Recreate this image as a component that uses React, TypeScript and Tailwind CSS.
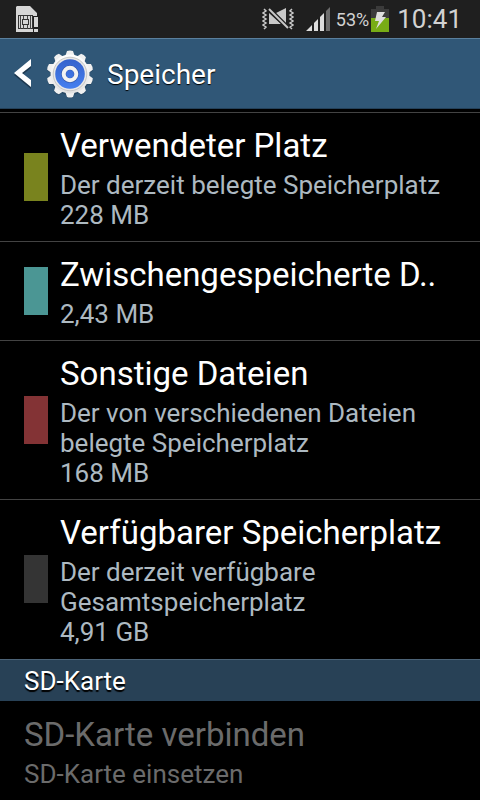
interface StorageItem {
  title: string
  lines: string[]
  swatch: string
}

const items: StorageItem[] = [
  {
    title: 'Verwendeter Platz',
    lines: ['Der derzeit belegte Speicherplatz', '228 MB'],
    swatch: 'bg-[#79831e]',
  },
  {
    title: 'Zwischengespeicherte D..',
    lines: ['2,43 MB'],
    swatch: 'bg-[#4b9694]',
  },
  {
    title: 'Sonstige Dateien',
    lines: ['Der von verschiedenen Dateien', 'belegte Speicherplatz', '168 MB'],
    swatch: 'bg-[#833335]',
  },
  {
    title: 'Verfügbarer Speicherplatz',
    lines: ['Der derzeit verfügbare', 'Gesamtspeicherplatz', '4,91 GB'],
    swatch: 'bg-[#343434]',
  },
]

function SimIcon() {
  return (
    <svg className="h-[26px] w-6" viewBox="0 0 24 26" aria-hidden="true">
      <path d="M1 0H14L21 7V10H17V26H0V1Z" fill="#d6d6d6" />
      <rect x="2.5" y="9.5" width="14" height="13" fill="none" stroke="#333" />
      <path
        d="M4.5 10V23M14.5 10V23M7.5 10V14M11.5 10V14M7.5 19V23M11.5 19V23"
        stroke="#444"
      />
      <rect x="6.5" y="13.5" width="6" height="5" fill="#d6d6d6" stroke="#333" />
      <path d="M18 11H22V21H18ZM18 23H22V26H18Z" fill="#d6d6d6" />
    </svg>
  )
}

function MuteIcon() {
  return (
    <svg className="h-[22px] w-8" viewBox="0 0 32 22" aria-hidden="true">
      <path
        d="M2 1L4 3L1 5L4 7L1 9L4 11L1 13L4 15L1 17L4 19L2 21M30 1L28 3L31 5L28 7L31 9L28 11L31 13L28 15L31 17L28 19L30 21"
        fill="none"
        stroke="#c8c8c8"
        strokeWidth="1.5"
      />
      <path d="M14 5L24 0V15Z" fill="#c8c8c8" />
      <path d="M7 5L19 16H7Z" fill="#c8c8c8" />
      <path d="M7 1L26 20" stroke="#1f1f1f" strokeWidth="4" />
      <path d="M7 1L26 20" stroke="#c8c8c8" strokeWidth="2" />
    </svg>
  )
}

function SignalIcon() {
  return (
    <svg className="h-6 w-6" viewBox="0 0 24 24" aria-hidden="true">
      <path
        d="M0 24L6 18V24ZM8 16L12 12V24H8ZM14 10L18 6V24H14Z"
        fill="#dcdcdc"
      />
      <path d="M20 4L24 0V24H20Z" fill="#6c6c6c" />
    </svg>
  )
}

function BatteryIcon() {
  return (
    <svg className="h-[26px] w-[18px]" viewBox="0 0 18 26" aria-hidden="true">
      <path d="M5 0H13V3H18V12H0V3H5Z" fill="#3b3b3b" />
      <rect y="12" width="18" height="14" fill="#78ac16" />
      <path d="M6 6H14L11 11H15L5 23L8 15H4Z" fill="#dedede" />
    </svg>
  )
}

function GearIcon() {
  const teeth = [0, 36, 72, 108, 144, 180, 216, 252, 288, 324]
  return (
    <svg className="h-12 w-12" viewBox="0 0 48 48" aria-hidden="true">
      <defs>
        <linearGradient id="metal" x1="0" y1="0" x2="0" y2="1">
          <stop offset="0" stopColor="#ffffff" />
          <stop offset="1" stopColor="#e2e2e2" />
        </linearGradient>
        <linearGradient id="blue" x1="0" y1="0" x2="0" y2="1">
          <stop offset="0" stopColor="#3562cc" />
          <stop offset="1" stopColor="#4680f0" />
        </linearGradient>
      </defs>
      <g fill="#1d3850" opacity="0.5" transform="translate(0 1)">
        <circle cx="24" cy="24" r="20" />
        {teeth.map((deg) => (
          <path
            key={deg}
            d="M20 6L21 1Q24 0 27 1L28 6Z"
            transform={`rotate(${deg} 24 24)`}
          />
        ))}
      </g>
      <g fill="#f0f0f0">
        {teeth.map((deg) => (
          <path
            key={deg}
            d="M19 7L21 1Q24 0 27 1L29 7Z"
            transform={`rotate(${deg} 24 24)`}
          />
        ))}
      </g>
      <circle cx="24" cy="24" r="19.5" fill="url(#metal)" />
      <circle cx="24" cy="24" r="16.8" fill="#e8e8e8" stroke="#bcbcbc" strokeWidth="0.8" />
      <circle cx="24" cy="24" r="14.8" fill="url(#blue)" />
      <circle cx="24" cy="24" r="6.3" fill="none" stroke="#2c4f9e" strokeWidth="4.8" />
      <circle cx="24" cy="24" r="6.3" fill="none" stroke="#f2f2f2" strokeWidth="4" />
    </svg>
  )
}

function StatusBar() {
  return (
    <div className="flex h-[38px] items-center bg-[#1f1f1f] pr-[18px] pl-4 text-[#d2d2d2]">
      <SimIcon />
      <div className="ml-auto flex items-center">
        <MuteIcon />
        <div className="ml-3">
          <SignalIcon />
        </div>
        <span className="ml-[6px] pt-[2px] text-lg">53%</span>
        <div className="ml-[2px]">
          <BatteryIcon />
        </div>
        <span className="ml-2 text-[26px] leading-9">10:41</span>
      </div>
    </div>
  )
}

export default function App() {
  return (
    <div className="min-h-screen bg-black font-['Roboto',sans-serif] text-white">
      <StatusBar />

      <header className="flex h-[71px] items-center border-t border-b border-t-[#5a7f9d] border-b-[#24415a] bg-[#305777]">
        <button
          type="button"
          aria-label="Zurück"
          className="flex items-center gap-[14px] pl-[14px]"
        >
          <svg className="h-8 w-[18px]" viewBox="0 0 18 32" aria-hidden="true">
            <path d="M17 3V10L8 17L17 24V31L0 17Z" fill="#1d3850" />
            <path d="M17 1V8L8 15L17 22V29L0 15Z" fill="#fff" />
          </svg>
          <GearIcon />
        </button>
        <h1 className="pt-[2px] pl-[13px] text-[28px] leading-9 [text-shadow:0_1px_1px_#000]">
          Speicher
        </h1>
      </header>

      <main className="pt-[3px]">
        <ul className="pb-px">
          {items.map((item) => (
            <li
              key={item.title}
              className="flex items-center gap-3 border-t border-[#434343] px-6 py-[11px]"
            >
              <span className={`h-12 w-6 shrink-0 ${item.swatch}`} />
              <div className="whitespace-nowrap">
                <h2 className="mb-[2px] text-[33px] leading-11">{item.title}</h2>
                {item.lines.map((line) => (
                  <p key={line} className="text-[26px] leading-[30px] text-[#adb9c1]">
                    {line}
                  </p>
                ))}
              </div>
            </li>
          ))}
        </ul>

        <h2 className="border-t border-[#4c6377] bg-[#284156] px-6 pt-[5px] pb-1 text-[26px] leading-8 [text-shadow:0_2px_1px_#000]">
          SD-Karte
        </h2>

        <div className="px-6 pt-3 text-[#6b6b6b]">
          <h3 className="mb-[2px] text-[33px] leading-11">SD-Karte verbinden</h3>
          <p className="text-[26px] leading-[30px]">SD-Karte einsetzen</p>
        </div>
      </main>
    </div>
  )
}
